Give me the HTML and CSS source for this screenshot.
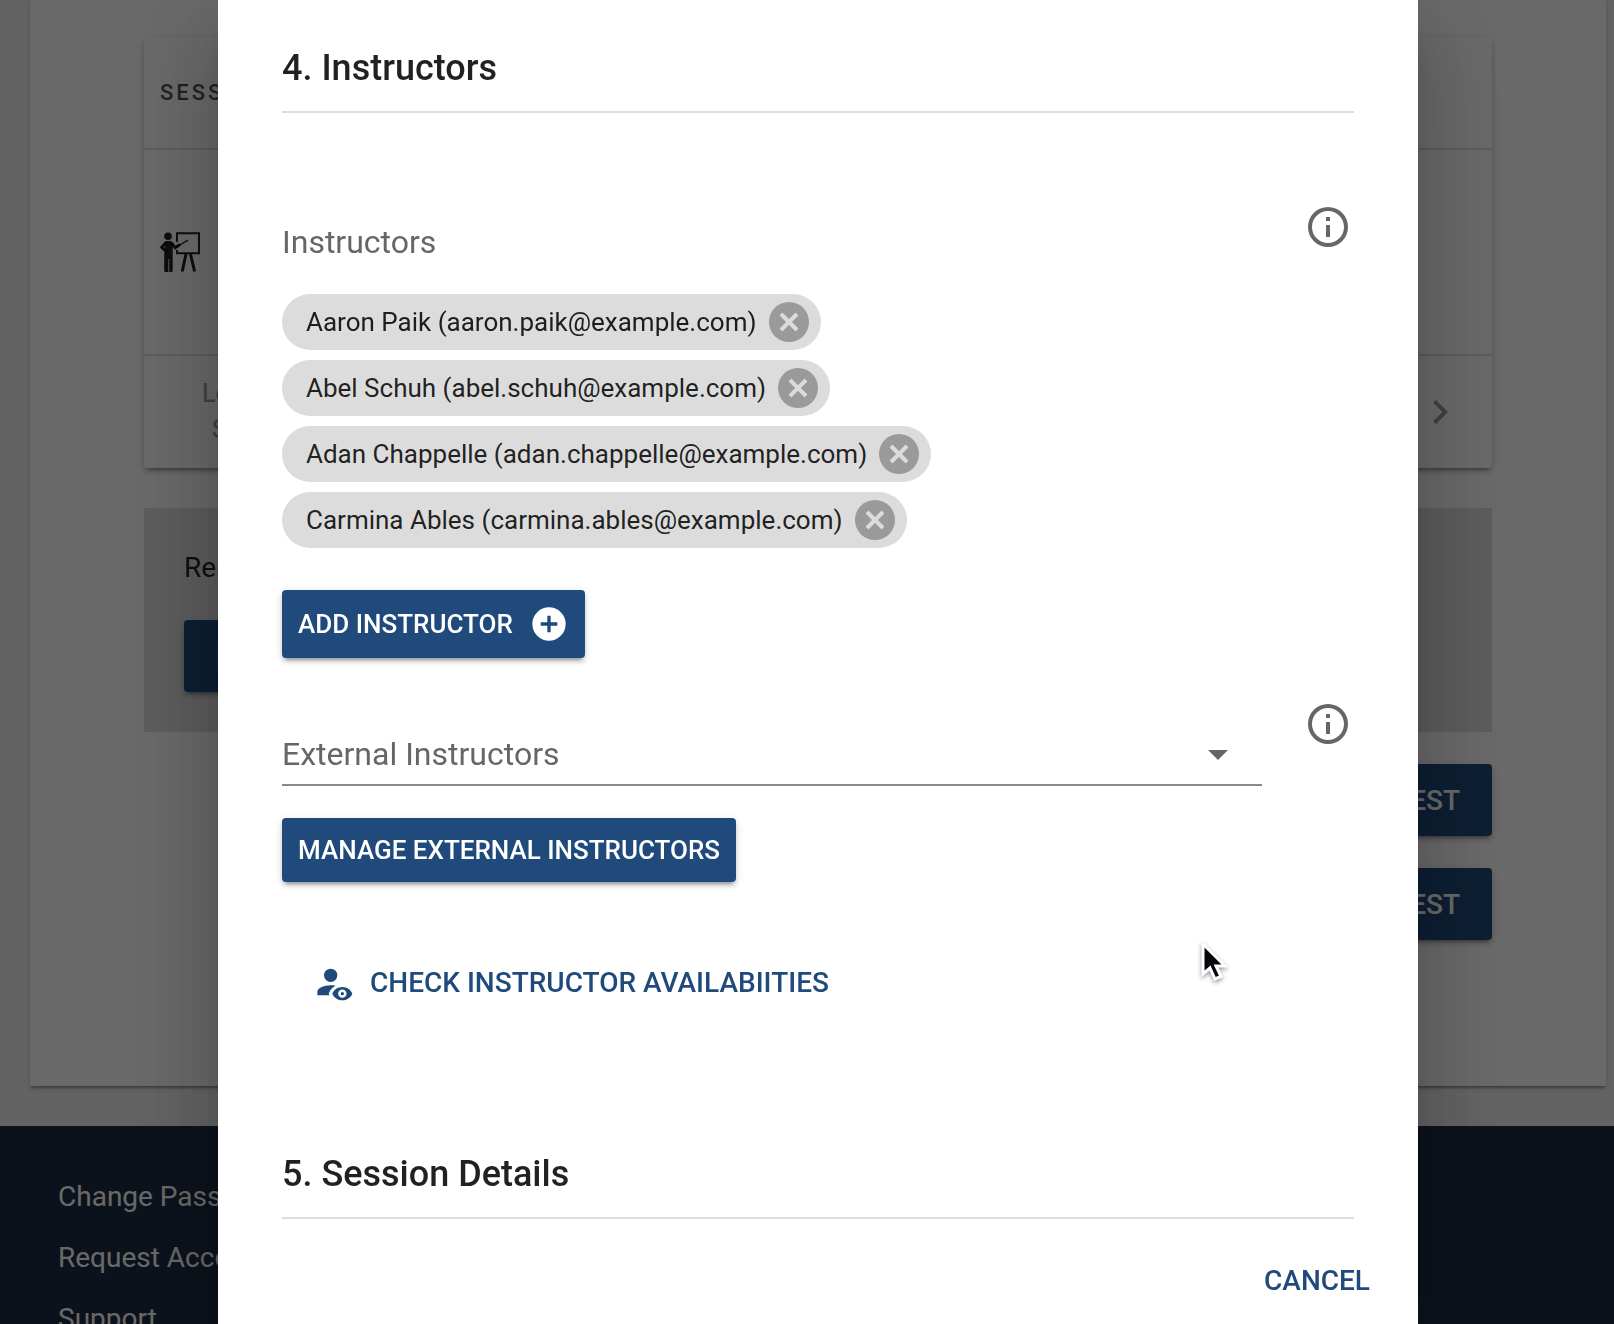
FILE: index.html
```
<!DOCTYPE html>
<html lang="en">

<head>
  <meta charset="UTF-8">
  <meta name="viewport" content="width=device-width, initial-scale=1.0">
  <title>Session Request</title>
  <link rel="stylesheet" href="styles.css">
</head>

<body>
  <main class="page">
    <div class="pageCard">
      <div class="panel">
        <table class="sessions">
          <thead>
            <tr><th>SESSION</th></tr>
          </thead>
          <tbody>
            <tr>
              <td>
                <svg class="teacher" viewBox="0 0 40 40" aria-hidden="true">
                  <circle cx="8" cy="4.2" r="3.8" />
                  <path d="M6 9H11L12.7 11V38.5Q12.7 40 11.4 40H9.2V27H8.4V40H5.6Q4.2 40 4.2 38.5V21L6.4 19L4.6 15.5Z" />
                  <path class="line" d="M6.5 10L1.7 15.3L6.5 19.8" />
                  <path class="line" d="M11.5 11L15.2 15.8L20 12.6" />
                  <path class="thin" d="M15.5 15.5L28 8.2" />
                  <path class="frame" d="M17 10V1.3H39V21.2H17V18" />
                  <path class="leg" d="M26 22L22.2 39.5M30.5 22L34.6 39.5" />
                </svg>
              </td>
            </tr>
          </tbody>
        </table>
        <div class="panelFooter">
          <span class="filter">Location<br>Stages</span>
          <button class="next" type="button" aria-label="Next page">
            <svg viewBox="0 0 24 24"><path d="M8.59 16.58L13.17 12L8.59 7.41L10 6L16 12L10 18L8.59 16.58Z" /></svg>
          </button>
        </div>
      </div>

      <div class="reminder">
        <p>Reminder</p>
        <button class="btn btn-large" type="button">REVIEW</button>
      </div>

      <div class="requests">
        <button class="btn btn-large" type="button">SAVE REQUEST</button>
        <button class="btn btn-large" type="button">SUBMIT REQUEST</button>
      </div>
    </div>
  </main>

  <footer class="footer">
    <a href="#">Change Password</a>
    <a href="#">Request Account</a>
    <a href="#">Support</a>
  </footer>

  <div class="overlay">
    <div class="modal" role="dialog" aria-label="Request a session">
      <div class="modalBody">
        <section>
          <h2>4. Instructors</h2>

          <div class="field">
            <div class="fieldMain">
              <h3>Instructors</h3>
              <ul class="chips">
                <li class="chip">Aaron Paik (aaron.paik@example.com)
                  <button type="button" aria-label="Remove Aaron Paik"><svg viewBox="0 0 40 40"><circle cx="20" cy="20" r="20" /><path d="M12 12L28 28M28 12L12 28" /></svg></button>
                </li>
                <li class="chip">Abel Schuh (abel.schuh@example.com)
                  <button type="button" aria-label="Remove Abel Schuh"><svg viewBox="0 0 40 40"><circle cx="20" cy="20" r="20" /><path d="M12 12L28 28M28 12L12 28" /></svg></button>
                </li>
                <li class="chip">Adan Chappelle (adan.chappelle@example.com)
                  <button type="button" aria-label="Remove Adan Chappelle"><svg viewBox="0 0 40 40"><circle cx="20" cy="20" r="20" /><path d="M12 12L28 28M28 12L12 28" /></svg></button>
                </li>
                <li class="chip">Carmina Ables (carmina.ables@example.com)
                  <button type="button" aria-label="Remove Carmina Ables"><svg viewBox="0 0 40 40"><circle cx="20" cy="20" r="20" /><path d="M12 12L28 28M28 12L12 28" /></svg></button>
                </li>
              </ul>
              <button class="btn btn-add" type="button">
                ADD INSTRUCTOR
                <svg viewBox="0 0 24 24"><path d="M17 13H13V17H11V13H7V11H11V7H13V11H17M12 2A10 10 0 0 0 2 12A10 10 0 0 0 12 22A10 10 0 0 0 22 12A10 10 0 0 0 12 2Z" /></svg>
              </button>
            </div>
            <button class="info" type="button" aria-label="About instructors">
              <svg viewBox="0 0 24 24"><path d="M11 9H13V7H11M12 20C7.59 20 4 16.41 4 12S7.59 4 12 4S20 7.59 20 12S16.41 20 12 20M12 2A10 10 0 0 0 2 12A10 10 0 0 0 12 22A10 10 0 0 0 22 12A10 10 0 0 0 12 2M11 17H13V11H11V17Z" /></svg>
            </button>
          </div>

          <div class="field field-external">
            <div class="fieldMain">
              <div class="select">
                <select aria-label="External Instructors">
                  <option>External Instructors</option>
                </select>
                <svg viewBox="0 0 24 24"><path d="M7 10L12 15L17 10H7Z" /></svg>
              </div>
              <button class="btn" type="button">MANAGE EXTERNAL INSTRUCTORS</button>
            </div>
            <button class="info" type="button" aria-label="About external instructors">
              <svg viewBox="0 0 24 24"><path d="M11 9H13V7H11M12 20C7.59 20 4 16.41 4 12S7.59 4 12 4S20 7.59 20 12S16.41 20 12 20M12 2A10 10 0 0 0 2 12A10 10 0 0 0 12 22A10 10 0 0 0 22 12A10 10 0 0 0 12 2M11 17H13V11H11V17Z" /></svg>
            </button>
          </div>

          <button class="btn-text" type="button">
            <svg viewBox="0 0 24 24"><path d="M10 4A4 4 0 0 1 14 8A4 4 0 0 1 10 12A4 4 0 0 1 6 8A4 4 0 0 1 10 4M17 18A1 1 0 0 1 18 19A1 1 0 0 1 17 20A1 1 0 0 1 16 19A1 1 0 0 1 17 18M17 15C19.73 15 22.06 16.66 23 19C22.06 21.34 19.73 23 17 23C14.27 23 11.94 21.34 11 19C11.94 16.66 14.27 15 17 15M17 16.5A2.5 2.5 0 0 0 14.5 19A2.5 2.5 0 0 0 17 21.5A2.5 2.5 0 0 0 19.5 19A2.5 2.5 0 0 0 17 16.5M9.27 20H2V18C2 15.79 5.58 14 10 14C11.04 14 12.03 14.1 12.94 14.28C11.25 15.15 9.89 16.57 9.14 18.26L8.85 19L9.27 20Z" /></svg>
            CHECK INSTRUCTOR AVAILABIITIES
          </button>
        </section>

        <section>
          <h2>5. Session Details</h2>
        </section>
      </div>
      <div class="modalActions">
        <button class="btn-text" type="button">CANCEL</button>
      </div>
    </div>
  </div>

  <svg class="cursor" viewBox="0 0 28 42" aria-hidden="true">
    <path d="M3 2V32L10 26L15 37L21 34.5L16 24H25Z" />
  </svg>
</body>

</html>
```
FILE: styles.css
```
* {
  box-sizing: border-box;
}

html,
body {
  height: 100%;
  margin: 0;
  overflow: hidden;
}

body {
  font-family: Roboto, "Liberation Sans", sans-serif;
  font-size: 28px;
  line-height: 40px;
  color: rgba(0, 0, 0, 0.87);
  background: #f0f0f0;
}

button,
select {
  font-family: inherit;
  border: 0;
  background: none;
  cursor: pointer;
}

svg {
  display: block;
  flex: none;
  fill: currentColor;
}

h2,
h3,
p,
ul {
  margin: 0;
  padding: 0;
}

/* page behind the dialog */
.page {
  padding: 0 8px 40px 30px;
}

.pageCard {
  padding: 37px 114px 146px;
  background: #fff;
  box-shadow: 0 4px 2px -2px rgba(0, 0, 0, 0.2), 0 2px 2px rgba(0, 0, 0, 0.14), 0 2px 6px rgba(0, 0, 0, 0.12);
}

.panel {
  border-radius: 4px;
  box-shadow: 0 6px 2px -4px rgba(0, 0, 0, 0.2), 0 4px 4px rgba(0, 0, 0, 0.14), 0 2px 10px rgba(0, 0, 0, 0.12);
}

.sessions {
  width: 100%;
  border-spacing: 0;
}

.sessions th,
.sessions td {
  padding: 0 16px;
  text-align: left;
  border-bottom: 2px solid rgba(0, 0, 0, 0.12);
}

.sessions th {
  height: 113px;
  font-size: 22px;
  font-weight: 500;
  letter-spacing: 3px;
  color: rgba(0, 0, 0, 0.7);
}

.sessions td {
  height: 206px;
}

.teacher {
  width: 40px;
  height: 40px;
}

.teacher .line,
.teacher .thin,
.teacher .frame,
.teacher .leg {
  fill: none;
  stroke: currentColor;
  stroke-width: 3;
}

.teacher .thin {
  stroke-width: 1.4;
}

.teacher .frame {
  stroke-width: 2;
}

.panelFooter {
  display: flex;
  align-items: center;
  justify-content: space-between;
  height: 112px;
  padding: 0 28px 0 58px;
  color: rgba(0, 0, 0, 0.38);
}

.filter {
  font-size: 25px;
  font-weight: 500;
  line-height: 36px;
  text-align: center;
}

.next {
  padding: 0;
  color: inherit;
}

.next svg {
  width: 48px;
  height: 48px;
}

.reminder {
  margin-top: 40px;
  padding: 40px;
  background: #e0e0e0;
}

.reminder p {
  margin-bottom: 32px;
}

.requests {
  display: flex;
  flex-direction: column;
  align-items: flex-end;
  gap: 32px;
  margin-top: 32px;
}

.footer {
  display: flex;
  flex-direction: column;
  align-items: flex-start;
  gap: 21px;
  padding: 51px 58px;
  background: #1e2d44;
}

.footer a {
  color: #fff;
  text-decoration: none;
}

/* buttons */
.btn {
  display: inline-flex;
  align-items: center;
  gap: 16px;
  height: 64px;
  padding: 0 16px;
  border-radius: 4px;
  font-size: 26px;
  font-weight: 500;
  color: #fff;
  background: #1f4a7b;
  box-shadow: 0 6px 2px -4px rgba(0, 0, 0, 0.2), 0 4px 4px rgba(0, 0, 0, 0.14), 0 2px 10px rgba(0, 0, 0, 0.12);
}

.btn-large {
  height: 72px;
  padding: 0 32px;
  font-size: 28px;
}

.btn-add {
  height: 68px;
}

.btn-add svg,
.btn-text svg {
  width: 40px;
  height: 40px;
}

.btn-text {
  display: flex;
  align-items: center;
  gap: 16px;
  height: 72px;
  padding: 0 32px;
  font-size: 28px;
  font-weight: 500;
  color: #1f4a7b;
}

/* dialog */
.overlay {
  position: fixed;
  top: 0;
  right: 0;
  bottom: 0;
  left: 0;
  display: flex;
  justify-content: center;
  padding-left: 22px;
  background: rgba(0, 0, 0, 0.59);
}

.modal {
  display: flex;
  flex-direction: column;
  width: 100%;
  max-width: 1200px;
  height: 100%;
  background: #fff;
  box-shadow: 0 22px 30px -14px rgba(0, 0, 0, 0.2), 0 48px 76px 6px rgba(0, 0, 0, 0.14), 0 18px 92px 16px rgba(0, 0, 0, 0.12);
}

.modalBody {
  flex: 1;
  min-height: 0;
  padding: 46px 64px 0;
  overflow: hidden;
}

.modalBody section + section {
  margin-top: 134px;
}

.modalBody h2 {
  padding-bottom: 21px;
  border-bottom: 2px solid #dcdcdc;
  font-size: 36px;
  font-weight: 500;
  line-height: 44px;
}

.modalActions {
  display: flex;
  justify-content: flex-end;
  padding: 8px 16px;
}

.field {
  display: flex;
  align-items: flex-start;
  gap: 40px;
  margin-top: 88px;
}

.field-external {
  margin-top: 40px;
  margin-bottom: 64px;
}

.fieldMain {
  display: flex;
  flex: 1;
  flex-direction: column;
  align-items: flex-start;
  padding-top: 21px;
}

.field h3 {
  margin-bottom: 32px;
  font-size: 32px;
  font-weight: 400;
  color: #666;
}

.info {
  padding: 2px;
  color: #666;
}

.info svg {
  width: 48px;
  height: 48px;
}

.chips {
  display: flex;
  flex-direction: column;
  align-items: flex-start;
  gap: 10px;
  margin-bottom: 42px;
  list-style: none;
}

.chip {
  display: flex;
  align-items: center;
  gap: 12px;
  height: 56px;
  padding: 0 12px 0 24px;
  border-radius: 28px;
  font-size: 26px;
  background: #dcdcdc;
}

.chip button {
  padding: 0;
  color: #9a9a9a;
}

.chip svg {
  width: 40px;
  height: 40px;
}

.chip path {
  stroke: #dcdcdc;
  stroke-width: 4;
}

.select {
  display: grid;
  align-items: end;
  width: 100%;
  height: 67px;
  margin-bottom: 32px;
  border-bottom: 2px solid #8a8a8a;
  color: #666;
}

.select select,
.select svg {
  grid-area: 1 / 1;
}

.select select {
  width: 100%;
  height: 60px;
  padding: 0;
  appearance: none;
  font-size: 32px;
  color: inherit;
}

.select svg {
  justify-self: end;
  width: 48px;
  height: 48px;
  margin: 0 20px 6px 0;
  pointer-events: none;
}

/* mouse pointer, floats over the dialog */
.cursor {
  position: fixed;
  top: 942px;
  left: 1200px;
  width: 28px;
  height: 42px;
  fill: #05070c;
  stroke: #fff;
  stroke-width: 3;
  filter: drop-shadow(0 2px 2px rgba(0, 0, 0, 0.4));
}
```
